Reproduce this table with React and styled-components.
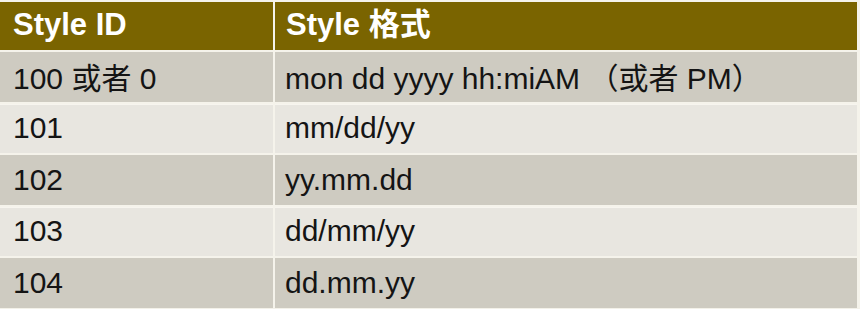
import React from "react";
import styled, { createGlobalStyle } from "styled-components";

const Global = createGlobalStyle`
  html, body { margin: 0; padding: 0; background: #f3f1e9; }
  body { font-family: "Liberation Sans", "Noto Sans CJK SC", sans-serif; }
`;

const Grid = styled.div`
  display: grid;
  grid-template-columns: 273px 582px;
  grid-template-rows: 48px repeat(5, 49.5px);
  gap: 2px;
  padding: 2px 3px 0 0;
  width: 860px;
  box-sizing: border-box;
  background: #f5f3eb;
  font-family: "Liberation Sans", "Noto Sans CJK SC", sans-serif;
`;

const HeadCell = styled.div`
  display: flex;
  align-items: center;
  background: #7a6400;
  color: #ffffff;
  font-weight: bold;
  font-size: 31px;
  line-height: 1;
  padding: 0 0 4px ${(p) => p.$pad}px;
  white-space: nowrap;
`;

const Cell = styled.div`
  display: flex;
  align-items: center;
  background: ${(p) => (p.$alt ? "#e8e6e0" : "#cecbc1")};
  box-shadow: ${(p) => (p.$alt ? "inset 0 1px 0 #f7f5ef" : "none")};
  color: #141414;
  font-size: 30px;
  line-height: 1;
  padding: ${(p) => p.$nudge}px 0 0 ${(p) => p.$pad}px;
  white-space: nowrap;
`;

const rows = [
  ["100 或者 0", "mon dd yyyy hh:miAM （或者 PM）"],
  ["101", "mm/dd/yy"],
  ["102", "yy.mm.dd"],
  ["103", "dd/mm/yy"],
  ["104", "dd.mm.yy"],
];

export default function App() {
  return (
    <>
      <Global />
      <Grid>
        <HeadCell $pad={13}>Style ID</HeadCell>
        <HeadCell $pad={11}>Style 格式</HeadCell>
        {rows.map(([id, fmt], i) => (
          <React.Fragment key={id}>
            <Cell $alt={i % 2 === 1} $pad={13} $nudge={i === 0 ? 5 : 0}>
              {id}
            </Cell>
            <Cell $alt={i % 2 === 1} $pad={10} $nudge={i === 0 ? 5 : 0}>
              {fmt}
            </Cell>
          </React.Fragment>
        ))}
      </Grid>
    </>
  );
}
